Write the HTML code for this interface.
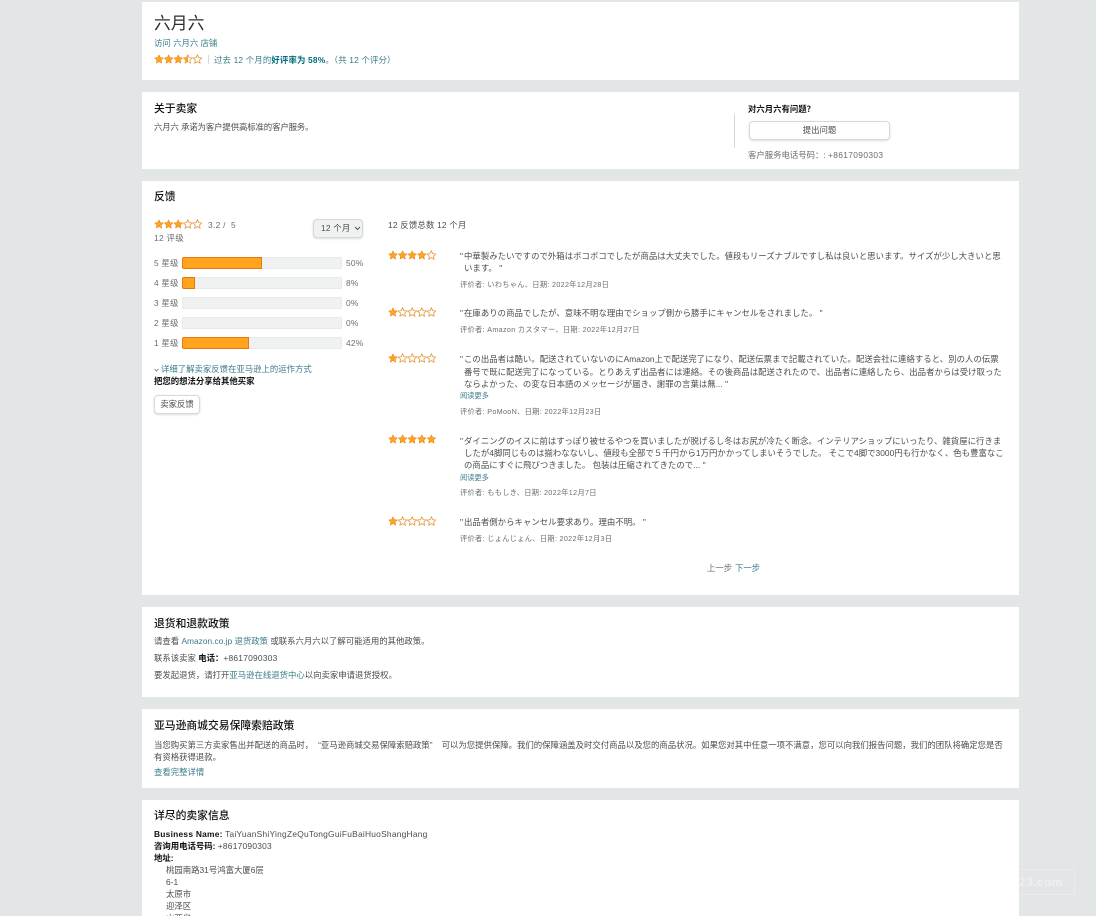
<!DOCTYPE html>
<html lang="zh">
<head>
<meta charset="utf-8">
<title>六月六</title>
<style>
html,body{margin:0;padding:0;width:1096px;height:916px;overflow:hidden;background:#e3e6e6}
body{font-family:"Liberation Sans","Noto Sans CJK SC",sans-serif;font-size:8.4px;color:#4a4d4d}
#w{position:absolute;left:0;top:0;width:1096px;height:916px;overflow:hidden;filter:blur(.3px)}
.p{position:absolute;left:142px;width:877px;background:#fff}
.t{position:absolute;white-space:nowrap;line-height:12px;height:12px}
.j{font-family:"Liberation Sans","Noto Sans CJK JP",sans-serif;color:#4a4d4d;letter-spacing:.04px}
.m{color:#6a6e6e}
.mt{font-size:7.2px;letter-spacing:.33px;color:#6a6e6e}
.l{color:#3b7c8a}
.b{font-weight:700;color:#0f1111}
.h{font-size:10.8px;font-weight:500;color:#0f1111}
.bar{position:absolute;left:182px;width:160px;height:12px;background:#f0f2f2;border-radius:2px;box-shadow:inset 0 0 0 .6px #e3e6e6}
.bar i{display:block;height:12px;background:#ffa41c;box-sizing:border-box;border:.6px solid #e47911;border-radius:2px 0 0 2px}
.btn{position:absolute;box-sizing:border-box;background:#fff;border:1px solid #d5d9d9;border-radius:4px;box-shadow:0 1px 2px rgba(15,17,17,.15);text-align:center;color:#4a4d4d}
.s{position:absolute;height:10px;width:48px;display:block}
</style>
</head>
<body>
<svg width="0" height="0" style="position:absolute">
<defs>
<linearGradient id="hg"><stop offset="50%" stop-color="#ffa41c"/><stop offset="50%" stop-color="#fff"/></linearGradient>
<path id="st" d="M5 .8 6.3 3.6 9.4 4 7.1 6.1 7.7 9.2 5 7.6 2.3 9.2 2.9 6.1.6 4 3.7 3.6Z"/>
<g id="f"><use href="#st" fill="#ffa41c" stroke="#e47911" stroke-width=".5"/></g>
<g id="e"><use href="#st" fill="#fff" stroke="#e8963a" stroke-width=".8"/></g>
<g id="a"><use href="#st" fill="url(#hg)" stroke="#e8963a" stroke-width=".7"/></g>
</defs>
</svg>
<div id="w">
<div class="p" style="top:2px;height:78px"></div>
<div class="p" style="top:92px;height:77px"></div>
<div class="p" style="top:181px;height:414px"></div>
<div class="p" style="top:607px;height:90px"></div>
<div class="p" style="top:709px;height:79px"></div>
<div class="p" style="top:800px;height:116px"></div>

<!-- Header -->
<div class="t" style="left:154px;top:14px;height:20px;line-height:20px;font-size:16.8px;color:#2b2e2e">六月六</div>
<div class="t l" style="left:154px;top:37px">访问 六月六 店铺</div>
<svg class="s" style="left:154px;top:54px" viewBox="0 0 48 10"><use href="#f" x="0"/><use href="#f" x="9.6"/><use href="#f" x="19.2"/><use href="#a" x="28.8"/><use href="#e" x="38.4"/></svg>
<div style="position:absolute;left:208px;top:55px;width:1px;height:9px;background:#d5d9d9"></div>
<div class="t l" style="left:214px;top:54px;letter-spacing:.17px">过去 12 个月的<b style="color:#006b7d">好评率为 58%</b>。（共 12 个评分）</div>

<!-- About -->
<div class="t h" style="left:154px;top:103px">关于卖家</div>
<div class="t" style="left:154px;top:121px;letter-spacing:-.1px">六月六 承诺为客户提供高标准的客户服务。</div>
<div class="t b" style="left:748px;top:103px">对六月六有问题？</div>
<div style="position:absolute;left:734px;top:114px;width:1px;height:34px;background:#d5d9d9"></div>
<div class="btn" style="left:749px;top:121px;width:141px;height:19px;line-height:17px">提出问题</div>
<div class="t m" style="left:748px;top:149px">客户服务电话号码：: <span style="letter-spacing:.35px">+8617090303</span></div>

<!-- Feedback left -->
<div class="t h" style="left:154px;top:191px">反馈</div>
<svg class="s" style="left:154px;top:219px" viewBox="0 0 48 10"><use href="#f" x="0"/><use href="#f" x="9.6"/><use href="#f" x="19.2"/><use href="#e" x="28.8"/><use href="#e" x="38.4"/></svg>
<div class="t m" style="left:208px;top:219px;letter-spacing:.3px">3.2 /&nbsp; 5</div>
<div class="t m" style="left:154px;top:232px;letter-spacing:.3px">12 评级</div>
<div class="btn" style="left:313px;top:219px;width:50px;height:19px;line-height:17px;background:#f0f2f2;letter-spacing:.2px;text-align:left;padding-left:7px">12 个月<svg style="position:absolute;left:40px;top:6px" width="7" height="5" viewBox="0 0 7 5"><path d="M1 1 3.5 3.5 6 1" fill="none" stroke="#555" stroke-width="1"/></svg></div>

<div class="t m" style="left:154px;top:257px;letter-spacing:.2px">5 星级</div>
<div class="bar" style="top:257px"><i style="width:80px"></i></div>
<div class="t m" style="left:346px;top:257px;letter-spacing:.2px">50%</div>
<div class="t m" style="left:154px;top:277px;letter-spacing:.2px">4 星级</div>
<div class="bar" style="top:277px"><i style="width:13px"></i></div>
<div class="t m" style="left:346px;top:277px;letter-spacing:.2px">8%</div>
<div class="t m" style="left:154px;top:297px;letter-spacing:.2px">3 星级</div>
<div class="bar" style="top:297px"></div>
<div class="t m" style="left:346px;top:297px;letter-spacing:.2px">0%</div>
<div class="t m" style="left:154px;top:317px;letter-spacing:.2px">2 星级</div>
<div class="bar" style="top:317px"></div>
<div class="t m" style="left:346px;top:317px;letter-spacing:.2px">0%</div>
<div class="t m" style="left:154px;top:337px;letter-spacing:.2px">1 星级</div>
<div class="bar" style="top:337px"><i style="width:67px"></i></div>
<div class="t m" style="left:346px;top:337px;letter-spacing:.2px">42%</div>

<svg style="position:absolute;left:154px;top:368px" width="5" height="4" viewBox="0 0 5 4"><path d="M.6 1 2.5 3 4.4 1" fill="none" stroke="#6a6e6e" stroke-width=".8"/></svg>
<div class="t l" style="left:161px;top:363px">详细了解卖家反馈在亚马逊上的运作方式</div>
<div class="t b" style="left:154px;top:375px">把您的想法分享给其他买家</div>
<div class="btn" style="left:154px;top:395px;width:46px;height:19px;line-height:17px">卖家反馈</div>

<!-- Reviews -->
<div class="t" style="left:388px;top:219px;letter-spacing:.2px">12 反馈总数 12 个月</div>

<svg class="s" style="left:388px;top:250px" viewBox="0 0 48 10"><use href="#f" x="0"/><use href="#f" x="9.6"/><use href="#f" x="19.2"/><use href="#f" x="28.8"/><use href="#e" x="38.4"/></svg>
<div class="t j" style="left:460px;top:250px">"</div>
<div class="t j" style="left:464px;top:250px">中華製みたいですので外箱はボコボコでしたが商品は大丈夫でした。値段もリーズナブルですし私は良いと思います。サイズが少し大きいと思</div>
<div class="t j" style="left:464px;top:262px">います。 "</div>
<div class="t j mt" style="left:460px;top:279px">评价者: いわちゃん、日期: 2022年12月28日</div>

<svg class="s" style="left:388px;top:307px" viewBox="0 0 48 10"><use href="#f" x="0"/><use href="#e" x="9.6"/><use href="#e" x="19.2"/><use href="#e" x="28.8"/><use href="#e" x="38.4"/></svg>
<div class="t j" style="left:460px;top:307px">"</div>
<div class="t j" style="left:464px;top:307px">在庫ありの商品でしたが、意味不明な理由でショップ側から勝手にキャンセルをされました。 "</div>
<div class="t j mt" style="left:460px;top:324px">评价者: Amazon カスタマー、日期: 2022年12月27日</div>

<svg class="s" style="left:388px;top:353px" viewBox="0 0 48 10"><use href="#f" x="0"/><use href="#e" x="9.6"/><use href="#e" x="19.2"/><use href="#e" x="28.8"/><use href="#e" x="38.4"/></svg>
<div class="t j" style="left:460px;top:353px">"</div>
<div class="t j" style="left:464px;top:353px">この出品者は酷い。配送されていないのにAmazon上で配送完了になり、配送伝票まで記載されていた。配送会社に連絡すると、別の人の伝票</div>
<div class="t j" style="left:464px;top:366px">番号で既に配送完了になっている。とりあえず出品者には連絡。その後商品は配送されたので、出品者に連絡したら、出品者からは受け取った</div>
<div class="t j" style="left:464px;top:378px">ならよかった、の変な日本語のメッセージが届き、謝罪の言葉は無... "</div>
<div class="t l" style="left:460px;top:390px;font-size:7.2px">阅读更多</div>
<div class="t j mt" style="left:460px;top:406px">评价者: PoMooN、日期: 2022年12月23日</div>

<svg class="s" style="left:388px;top:434px" viewBox="0 0 48 10"><use href="#f" x="0"/><use href="#f" x="9.6"/><use href="#f" x="19.2"/><use href="#f" x="28.8"/><use href="#f" x="38.4"/></svg>
<div class="t j" style="left:460px;top:435px">"</div>
<div class="t j" style="left:464px;top:435px">ダイニングのイスに前はすっぽり被せるやつを買いましたが脱げるし冬はお尻が冷たく断念。インテリアショップにいったり、雑貨屋に行きま</div>
<div class="t j" style="left:464px;top:447px">したが4脚同じものは揃わなないし、値段も全部で５千円から1万円かかってしまいそうでした。 そこで4脚で3000円も行かなく、色も豊富なこ</div>
<div class="t j" style="left:464px;top:459px">の商品にすぐに飛びつきました。 包装は圧縮されてきたので... "</div>
<div class="t l" style="left:460px;top:472px;font-size:7.2px">阅读更多</div>
<div class="t j mt" style="left:460px;top:487px">评价者: ももしき、日期: 2022年12月7日</div>

<svg class="s" style="left:388px;top:516px" viewBox="0 0 48 10"><use href="#f" x="0"/><use href="#e" x="9.6"/><use href="#e" x="19.2"/><use href="#e" x="28.8"/><use href="#e" x="38.4"/></svg>
<div class="t j" style="left:460px;top:516px">"</div>
<div class="t j" style="left:464px;top:516px">出品者側からキャンセル要求あり。理由不明。 "</div>
<div class="t j mt" style="left:460px;top:533px">评价者: じょんじょん、日期: 2022年12月3日</div>

<div class="t m" style="left:707px;top:562px">上一步</div>
<div class="t l" style="left:735px;top:562px">下一步</div>

<!-- Returns -->
<div class="t h" style="left:154px;top:618px">退货和退款政策</div>
<div class="t" style="left:154px;top:635px">请查看 <span class="l">Amazon.co.jp 退货政策</span> 或联系六月六以了解可能适用的其他政策。</div>
<div class="t" style="left:154px;top:652px">联系该卖家 <b style="color:#0f1111">电话：</b><span style="letter-spacing:.25px">+8617090303</span></div>
<div class="t" style="left:154px;top:669px">要发起退货，请打开<span class="l">亚马逊在线退货中心</span>以向卖家申请退货授权。</div>

<!-- Claim policy -->
<div class="t h" style="left:154px;top:720px">亚马逊商城交易保障索赔政策</div>
<div class="t" style="left:154px;top:739px">当您购买第三方卖家售出并配送的商品时，<span style="margin-left:5px">“亚马逊商城交易保障索赔政策”</span><span style="margin-left:9px">可以为您提供保障。我们的保障涵盖及时交付商品以及您的商品状况。如果您对其中任意一项不满意，您可以向我们报告问题，我们的团队将确定您是否</span></div>
<div class="t" style="left:154px;top:751px">有资格获得退款。</div>
<div class="t l" style="left:154px;top:766px">查看完整详情</div>

<!-- Details -->
<div class="t h" style="left:154px;top:810px">详尽的卖家信息</div>
<div class="t" style="left:154px;top:828px;letter-spacing:.25px"><b style="color:#0f1111">Business Name:</b> TaiYuanShiYingZeQuTongGuiFuBaiHuoShangHang</div>
<div class="t" style="left:154px;top:840px"><b style="color:#0f1111">咨询用电话号码:</b> <span style="letter-spacing:.25px">+8617090303</span></div>
<div class="t b" style="left:154px;top:852px">地址:</div>
<div class="t" style="left:166px;top:864px">桃园南路31号鸿富大厦6层</div>
<div class="t" style="left:166px;top:876px">6-1</div>
<div class="t" style="left:166px;top:888px">太原市</div>
<div class="t" style="left:166px;top:900px">迎泽区</div>
<div class="t" style="left:166px;top:912px">山西省</div>

<!-- Watermark -->
<div style="position:absolute;left:1019px;top:869px;width:56px;height:26px;box-sizing:border-box;border:1px solid rgba(255,255,255,.25);border-left:0"></div>
<div class="t" style="left:1019px;top:876px;font-size:12px;font-weight:700;color:rgba(255,255,255,.4);letter-spacing:.4px">23.com</div>
</div>
</body>
</html>
